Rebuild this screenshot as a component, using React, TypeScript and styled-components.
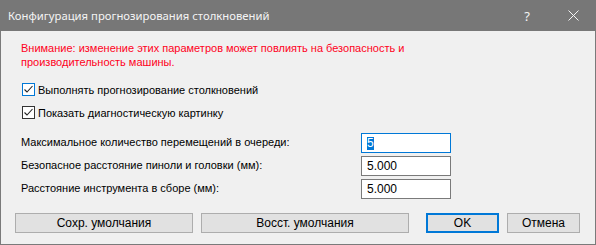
import React from 'react';
import styled, { createGlobalStyle } from 'styled-components';

const GlobalStyle = createGlobalStyle`
  html, body {
    margin: 0;
    padding: 0;
    background: #ffffff;
  }
  * {
    box-sizing: border-box;
  }
`;

const uiFont = `"Liberation Sans", Arial, sans-serif`;

const Window = styled.div`
  width: 596px;
  height: 245px;
  display: flex;
  flex-direction: column;
  background: #f0f0f0;
  border: 1px solid #7a7a7a;
  border-top: none;
  font-family: ${uiFont};
  font-size: 11px;
  color: #000;
`;

const TitleBar = styled.div`
  height: 31px;
  flex-shrink: 0;
  display: flex;
  align-items: center;
  background: #777777;
  color: #f4f4f4;
  padding-left: 8px;
  margin: 0 -1px;
`;

const Title = styled.div`
  flex: 1;
  font-family: "Noto Sans", "Open Sans", sans-serif;
  font-size: 11.3px;
  padding-bottom: 1px;
`;

const CaptionButton = styled.div`
  width: 46px;
  height: 31px;
  display: flex;
  align-items: center;
  justify-content: center;
  font-family: "Noto Sans", sans-serif;
  font-size: 13px;
  color: #f4f4f4;
`;

const Body = styled.div`
  flex: 1;
  display: flex;
  flex-direction: column;
  padding: 10px 15px 0 13px;
`;

const Warning = styled.div`
  padding-left: 7px;
  color: #ff0022;
  line-height: 14px;
  margin-bottom: 9px;
`;

const CheckRow = styled.div`
  height: 23px;
  display: flex;
  align-items: center;
  padding-left: 8px;
  gap: 3px;
`;

const Box = styled.span<{ $focused?: boolean }>`
  width: 13px;
  height: 13px;
  display: flex;
  align-items: center;
  justify-content: center;
  background: #ffffff;
  border: 1px solid ${(p) => (p.$focused ? '#0078d7' : '#333333')};
`;

const Fields = styled.div`
  display: grid;
  grid-template-columns: 347px 90px;
  row-gap: 3px;
  margin-top: 9px;
`;

const Label = styled.div`
  display: flex;
  align-items: center;
  padding-left: 7px;
  padding-bottom: 3px;
`;

const Field = styled.div<{ $focused?: boolean }>`
  height: 20px;
  display: flex;
  align-items: center;
  padding-left: 5px;
  background: #ffffff;
  border: 1px solid ${(p) => (p.$focused ? '#0078d7' : '#7a7a7a')};
  font-size: 12px;
`;

const Selection = styled.span`
  background: #0078d7;
  color: #ffffff;
  line-height: 13px;
`;

const Buttons = styled.div`
  display: flex;
  gap: 8px;
  margin-top: 14px;
  padding-left: 1px;
`;

const Button = styled.div<{ $w: number; $default?: boolean; $gapLeft?: number }>`
  width: ${(p) => p.$w}px;
  height: 20px;
  margin-left: ${(p) => p.$gapLeft ?? 0}px;
  display: flex;
  align-items: center;
  justify-content: center;
  background: #e1e1e1;
  border: ${(p) => (p.$default ? '2px solid #0078d7' : '1px solid #adadad')};
  font-size: 12px;
`;

const Check = () => (
  <svg width="11" height="11" viewBox="0 0 11 11">
    <path d="M1.5 5.5 L4 8 L9.5 2" fill="none" stroke="#222" strokeWidth="1.1" />
  </svg>
);

const CloseIcon = () => (
  <svg width="11" height="11" viewBox="0 0 11 11">
    <path d="M0.5 0.5 L10.5 10.5 M10.5 0.5 L0.5 10.5" stroke="#f4f4f4" strokeWidth="1" />
  </svg>
);

const fields = [
  { label: 'Максимальное количество перемещений в очереди:', value: '5', focused: true },
  { label: 'Безопасное расстояние пиноли и головки (мм):', value: '5.000' },
  { label: 'Расстояние инструмента в сборе (мм):', value: '5.000' },
];

const App: React.FC = () => {
  return (
    <>
      <GlobalStyle />
      <Window>
        <TitleBar>
          <Title>Конфигурация прогнозирования столкновений</Title>
          <CaptionButton>?</CaptionButton>
          <CaptionButton>
            <CloseIcon />
          </CaptionButton>
        </TitleBar>
        <Body>
          <Warning>
            Внимание: изменение этих параметров может повлиять на безопасность и
            <br />
            производительность машины.
          </Warning>
          <CheckRow>
            <Box $focused>
              <Check />
            </Box>
            Выполнять прогнозирование столкновений
          </CheckRow>
          <CheckRow>
            <Box>
              <Check />
            </Box>
            Показать диагностическую картинку
          </CheckRow>
          <Fields>
            {fields.map((f) => (
              <React.Fragment key={f.label}>
                <Label>{f.label}</Label>
                <Field $focused={f.focused}>
                  {f.focused ? <Selection>{f.value}</Selection> : f.value}
                </Field>
              </React.Fragment>
            ))}
          </Fields>
          <Buttons>
            <Button $w={178}>Сохр. умолчания</Button>
            <Button $w={208}>Восст. умолчания</Button>
            <Button $w={73} $default $gapLeft={9}>
              OK
            </Button>
            <Button $w={73}>Отмена</Button>
          </Buttons>
        </Body>
      </Window>
    </>
  );
};

export default App;
